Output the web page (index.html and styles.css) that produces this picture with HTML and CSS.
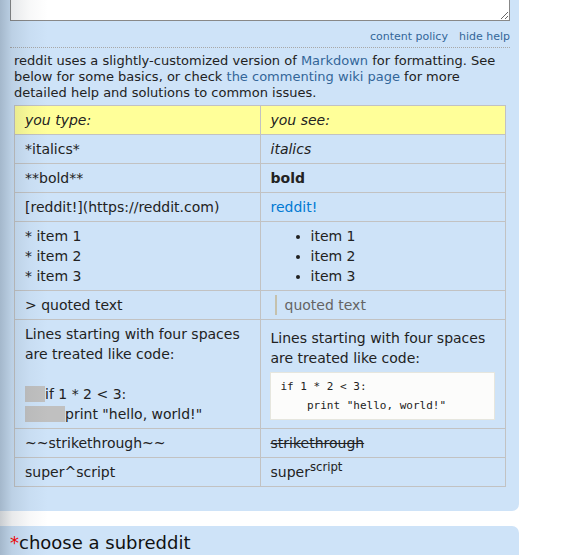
FILE: index.html
```html
<!DOCTYPE html>
<html>
<head>
<meta charset="utf-8">
<link rel="stylesheet" href="styles.css">
</head>
<body>
<div class="shade"></div>
<div class="panel panel-top">
  <textarea class="editor"></textarea>
  <div class="bottom-links">
    <a href="#">content policy</a>
    <a href="#">hide help</a>
  </div>
  <div class="markhelp">
    <p class="intro">reddit uses a slightly-customized version of <a href="#">Markdown</a> for formatting. See below for some basics, or check <a href="#">the commenting wiki page</a> for more detailed help and solutions to common issues.</p>
    <table class="md-table">
      <tr class="head">
        <th>you type:</th>
        <th>you see:</th>
      </tr>
      <tr>
        <td>*italics*</td>
        <td><em>italics</em></td>
      </tr>
      <tr>
        <td>**bold**</td>
        <td><strong>bold</strong></td>
      </tr>
      <tr>
        <td>[reddit!](https://reddit.com)</td>
        <td><a class="md-link" href="#">reddit!</a></td>
      </tr>
      <tr>
        <td>* item 1<br>* item 2<br>* item 3</td>
        <td><ul class="md-list"><li>item 1</li><li>item 2</li><li>item 3</li></ul></td>
      </tr>
      <tr>
        <td>&gt; quoted text</td>
        <td><blockquote class="md-quote">quoted text</blockquote></td>
      </tr>
      <tr>
        <td>Lines starting with four spaces<br>are treated like code:<br><br><span class="sp">&nbsp;&nbsp;&nbsp;&nbsp;</span>if 1 * 2 &lt; 3:<br><span class="sp">&nbsp;&nbsp;&nbsp;&nbsp;&nbsp;&nbsp;&nbsp;&nbsp;</span>print "hello, world!"</td>
        <td><p class="code-intro">Lines starting with four spaces are treated like code:</p><pre class="md-pre">if 1 * 2 &lt; 3:
    print "hello, world!"</pre></td>
      </tr>
      <tr>
        <td>~~strikethrough~~</td>
        <td><del>strikethrough</del></td>
      </tr>
      <tr>
        <td>super^script</td>
        <td>super<sup>script</sup></td>
      </tr>
    </table>
  </div>
</div>
<div class="panel panel-bottom">
  <span class="req">*</span>choose a subreddit
</div>
</body>
</html>
```
FILE: styles.css
```css
html, body {
  margin: 0;
  padding: 0;
  background: #fff;
}
body {
  font-family: "DejaVu Sans", Verdana, sans-serif;
  color: #222;
  overflow: hidden;
  position: relative;
  height: 555px;
}
a {
  text-decoration: none;
  color: #369;
}
.shade {
  position: absolute;
  left: 0;
  top: 0;
  bottom: 0;
  width: 48px;
  background: linear-gradient(to right, rgba(30, 45, 60, 0.24) 0, rgba(30, 45, 60, 0.1) 12px, rgba(30, 45, 60, 0.03) 30px, rgba(30, 45, 60, 0) 48px);
  pointer-events: none;
  z-index: 5;
}
.panel {
  background: #cee3f8;
  width: 500px;
  padding-left: 10px;
  padding-right: 9px;
}
.panel-top {
  padding-bottom: 24px;
  border-radius: 0 0 7px 0;
}
.editor {
  display: block;
  box-sizing: border-box;
  width: 500px;
  height: 100px;
  margin: -79px 0 0 0;
  border: 1px solid #888;
  background: #fff;
  padding: 2px;
  font-family: "DejaVu Sans", sans-serif;
}
.bottom-links {
  display: flex;
  justify-content: flex-end;
  gap: 11px;
  margin-top: 10px;
  font-size: 11px;
  line-height: 12px;
}
.markhelp {
  margin-top: 4px;
  border-top: 1px dotted #a8a8a8;
  padding: 5px 4px 0 4px;
}
.intro {
  margin: 0 0 4px 0;
  font-size: 13px;
  line-height: 16px;
}
.md-table {
  width: 100%;
  border-collapse: collapse;
  table-layout: fixed;
  font-size: 14px;
  line-height: 20px;
}
.md-table th,
.md-table td {
  border: 1px solid #c2c2c2;
  padding: 4px 10px;
  text-align: left;
  vertical-align: middle;
  font-weight: normal;
}
.head th {
  background: #ffff99;
  font-style: italic;
}
.md-link {
  color: #0079d3;
}
.md-list {
  margin: 0;
  padding-left: 40px;
}
.md-quote {
  margin: 0 0 0 4px;
  padding: 0 8px;
  border-left: 2px solid #c5c1ad;
  color: #646464;
}
.sp {
  background: #c0c0c0;
  letter-spacing: 0.55px;
}
.code-intro {
  margin: 0;
}
.md-pre {
  margin: 4px 0 0 -1px;
  padding: 4px 10px;
  background: #fcfcfb;
  border: 1px solid #e6e6de;
  font-family: "DejaVu Sans Mono", monospace;
  font-size: 11px;
  line-height: 19px;
  color: #222;
}
del {
  text-decoration: line-through;
}
sup {
  line-height: 0;
}
.panel-bottom {
  margin-top: 15px;
  border-radius: 0 7px 0 0;
  padding-top: 6px;
  padding-bottom: 40px;
  padding-left: 10px;
  font-size: 18px;
  color: #111;
}
.req {
  color: #f00;
}
```
